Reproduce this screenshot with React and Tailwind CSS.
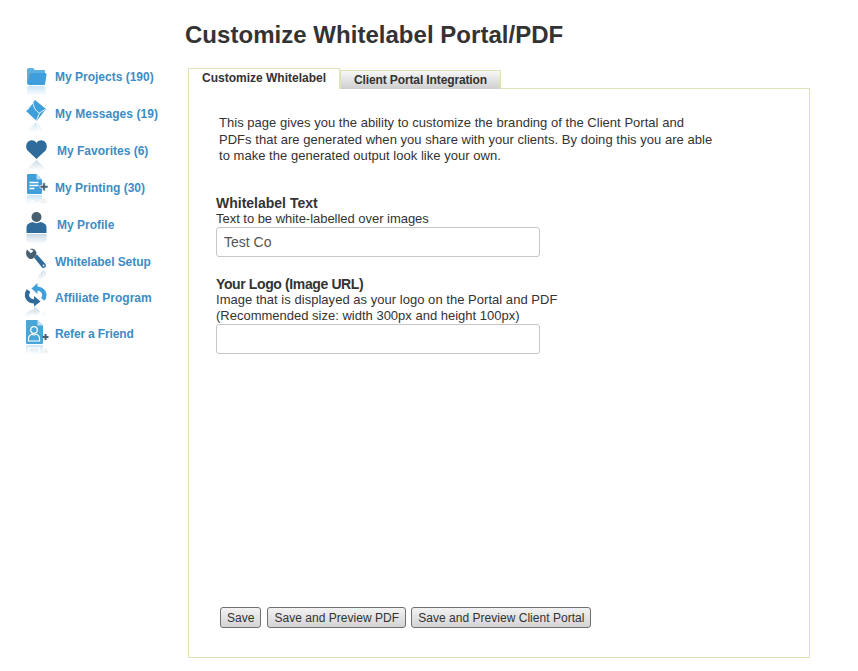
import React from "react";

// icon art plus a faded mirror image under it, drawn in a 26x40 box centred on the row
const Icon = ({ id, base, children }) => (
  <svg width="26" height="40" viewBox="0 0 26 40" className="overflow-visible">
    <defs>
      <linearGradient id={`${id}-g`} x1="0" y1={base} x2="0" y2={base + 11} gradientUnits="userSpaceOnUse">
        <stop offset="0" stopColor="#fff" stopOpacity="0.3" />
        <stop offset="1" stopColor="#fff" stopOpacity="0" />
      </linearGradient>
      <mask id={`${id}-m`} maskUnits="userSpaceOnUse" x="-4" y="0" width="34" height="50">
        <rect x="-4" y={base} width="34" height="12" fill={`url(#${id}-g)`} />
      </mask>
    </defs>
    <g mask={`url(#${id}-m)`}>
      <g transform={`matrix(1 0 0 -1 0 ${2 * base + 1})`}>{children}</g>
    </g>
    {children}
  </svg>
);

const FolderIcon = () => (
  <Icon id="folder" base={28}>
    <path d="M2 13a2 2 0 0 1 2-2h4l2 2h9a1 1 0 0 1 1 1v2H6L4 27H3a1 1 0 0 1-1-1z" fill="#5fb0e2" />
    <path d="M6 16h14a1.500 1.500 0 0 1 1.500 1.700l-1.300 8.800a1.500 1.500 0 0 1-1.500 1.500H4a1.500 1.500 0 0 1-1.500-1.700L4.500 17.500A1.500 1.500 0 0 1 6 16z" fill="#3f9fdc" />
  </Icon>
);
const MailIcon = () => (
  <Icon id="mail" base={27}>
    <path d="M10 6l11 9-9.300 12L1 17z" fill="#3f9fdc" />
    <path d="M8 8.500c.5 5 3 9 6.500 10.500L20 15.500M8 8.500L2 16.500M14.500 19L11.500 26.500" stroke="#fff" strokeWidth="0.9" fill="none" />
  </Icon>
);
const HeartIcon = () => (
  <Icon id="heart" base={28}>
    <path d="M11.500 28L2.500 19.500C0 16.500 1 10.500 5.500 9.500 8 9 10.500 10 11.500 12 12.500 10 15 9 17.500 9.500 22 10.500 23 16.500 20.500 19.500z" fill="#2f6c9c" />
  </Icon>
);
const DocPlusIcon = () => (
  <Icon id="doc" base={26}>
    <path d="M2 7a1 1 0 0 1 1-1h8.500L17 11.500V25a1 1 0 0 1-1 1H3a1 1 0 0 1-1-1z" fill="#3f9fdc" />
    <path d="M11.500 6L17 11.500h-5.500z" fill="#bcdcf2" />
    <path d="M4.500 14.500h9M4.500 17.500h9M4.500 20.500h5" stroke="#fff" strokeWidth="1.300" />
    <path d="M15 17.500h2.700V14.800h2.600v2.700H23v2.600h-2.700v2.700h-2.600v-2.700H15z" fill="#47606f" stroke="#fff" strokeWidth="0.6" />
  </Icon>
);
const PersonIcon = () => (
  <Icon id="person" base={28}>
    <circle cx="11.500" cy="12" r="5" fill="#47606f" />
    <path d="M1.500 28v-5.500c0-3.500 3.500-5 6.500-5.500 1 1.500 6 1.500 7 0 3 .5 6.500 2 6.500 5.500V28z" fill="#2f6c9c" />
  </Icon>
);
const WrenchIcon = () => (
  <Icon id="wrench" base={27}>
    <path d="M2 7.500L5.800 11.300 8.600 8.800 4.800 7C8 5.800 11.500 8 11.500 11.500L11 13.500 8 16.500 6.500 17C2.500 17 -.5 12.500 2 7.500z" fill="#47606f" />
    <path d="M9 15.500l3-3 8.500 9.500a2.500 2.500 0 0 1-3.500 3.500z" fill="#2f6c9c" />
    <circle cx="18.600" cy="23.500" r="0.900" fill="#fff" />
  </Icon>
);
const SyncIcon = () => (
  <Icon id="sync" base={28}>
    <path d="M18 21.500C21.500 16 18 10.500 11 10.500" stroke="#3f9fdc" strokeWidth="4.200" fill="none" />
    <path d="M12.500 5v11L6.500 10.500z" fill="#3f9fdc" />
    <path d="M3.500 12.500C0 18 3 23.500 9.500 23.500" stroke="#2f6c9c" strokeWidth="4.200" fill="none" />
    <path d="M9 18v10.500l6.500-5z" fill="#2f6c9c" />
  </Icon>
);
const ContactPlusIcon = () => (
  <Icon id="contact" base={30}>
    <path d="M1 7a1 1 0 0 1 1-1h10.500L18 11.500V29a1 1 0 0 1-1 1H2a1 1 0 0 1-1-1z" fill="#49a6d9" />
    <path d="M12.500 6L18 11.500h-5.500z" fill="#c4e0f3" />
    <circle cx="9" cy="16" r="3.300" fill="#49a6d9" stroke="#fff" strokeWidth="1.200" />
    <path d="M3.500 27v-2.500c0-2.500 2-3.800 3.500-4.300 1 1 3 1 4 0 1.500.5 3.500 1.800 3.500 4.300V27z" fill="#49a6d9" stroke="#fff" strokeWidth="1.200" />
    <path d="M17.500 22h2v-2h2v2h2v2h-2v2h-2v-2h-2z" fill="#47606f" />
  </Icon>
);

const navItems = [
  { label: "My Projects (190)", Icon: FolderIcon, row: "h-[36px]", box: "w-[30px]", fit: "" },
  { label: "My Messages (19)", Icon: MailIcon, row: "h-[37px]", box: "w-[30px]", fit: "tracking-[0.06px]" },
  { label: "My Favorites (6)", Icon: HeartIcon, row: "h-[37px]", box: "w-[32px]", fit: "" },
  { label: "My Printing (30)", Icon: DocPlusIcon, row: "h-[37px]", box: "w-[30px]", fit: "" },
  { label: "My Profile", Icon: PersonIcon, row: "h-[37px]", box: "w-[32px]", fit: "" },
  { label: "Whitelabel Setup", Icon: WrenchIcon, row: "h-[37px]", box: "w-[30px]", fit: "tracking-[-0.06px]" },
  { label: "Affiliate Program", Icon: SyncIcon, row: "h-[36px]", box: "w-[30px]", fit: "" },
  { label: "Refer a Friend", Icon: ContactPlusIcon, row: "h-[36px]", box: "w-[30px]", fit: "tracking-[-0.15px]" },
];

function Sidebar() {
  return (
    <ul className="w-[188px] shrink-0 pl-[25px] pt-[59px]">
      {navItems.map(({ label, Icon, row, box, fit }) => (
        <li key={label} className={`flex items-center ${row}`}>
          <span className={`${box} shrink-0 h-[40px]`}>
            <Icon />
          </span>
          <a className={`text-[12px] font-bold text-[#3c8dc5] whitespace-nowrap ${fit}`}>{label}</a>
        </li>
      ))}
    </ul>
  );
}

const inputClass =
  "block w-[324px] h-[30px] rounded-[3px] border border-[#c6c6c6] bg-white pl-[7px] text-[14px] text-[#555555] outline-none";
const buttonClass =
  "h-[21px] px-[6px] rounded-[3px] border border-[#707070] bg-gradient-to-b from-[#f2f2f2] to-[#d4d4d4] text-[12px] leading-none tracking-[0.03px] text-[#333333]";

export default function App() {
  return (
    <div className="flex w-[858px] h-[671px] overflow-hidden bg-white font-['Liberation_Sans',Arial,sans-serif] text-[13px] text-[#333333]">
      <Sidebar />
      <main className="flex-1 min-w-0">
        <h1 className="-ml-[3px] mt-[19px] h-[49px] text-[24px] leading-[31px] tracking-[0.03px] font-bold text-[#333333]">
          Customize Whitelabel Portal/PDF
        </h1>
        <div className="flex items-end h-[21px] relative z-10">
          <div className="w-[152px] h-[21px] border border-b-0 border-[#dfe3b8] bg-white pl-[13px] text-[12px] leading-[18px] font-bold text-[#333333]">
            Customize Whitelabel
          </div>
          <div className="w-[161px] h-[19px] border border-b-0 border-[#dfe3b8] bg-gradient-to-b from-[#f7f7f7] to-[#cfcfcf] pl-[13px] pt-px text-[12px] leading-[17px] tracking-[-0.12px] font-bold text-[#333333]">
            Client Portal Integration
          </div>
        </div>
        <section className="w-[622px] h-[570px] -mt-px border border-[#dfe3b8] pl-[27px] flex flex-col">
          <p className="mt-[26px] ml-[3px] w-[497px] text-[13px] leading-[16.5px] tracking-[0.03px]">
            This page gives you the ability to customize the branding of the Client Portal and PDFs that are generated when you share with your clients. By doing this you are able to make the generated output look like your own.
          </p>
          <h2 className="mt-[30px] text-[14px] leading-[16px] font-bold">Whitelabel Text</h2>
          <p className="text-[13px] leading-[16px] tracking-[-0.03px]">Text to be white-labelled over images</p>
          <input className={inputClass} defaultValue="Test Co" />
          <h2 className="mt-[19px] text-[14px] leading-[16px] tracking-[-0.38px] font-bold">Your Logo (Image URL)</h2>
          <p className="text-[13px] leading-[16px] tracking-[0.03px]">Image that is displayed as your logo on the Portal and PDF</p>
          <p className="text-[13px] leading-[16px]">(Recommended size: width 300px and height 100px)</p>
          <input className={inputClass} />
          <div className="mt-auto mb-[29px] ml-[4px] flex gap-[6px]">
            <button className={buttonClass}>Save</button>
            <button className={buttonClass}>Save and Preview PDF</button>
            <button className={`${buttonClass} -ml-px`}>Save and Preview Client Portal</button>
          </div>
        </section>
      </main>
    </div>
  );
}
